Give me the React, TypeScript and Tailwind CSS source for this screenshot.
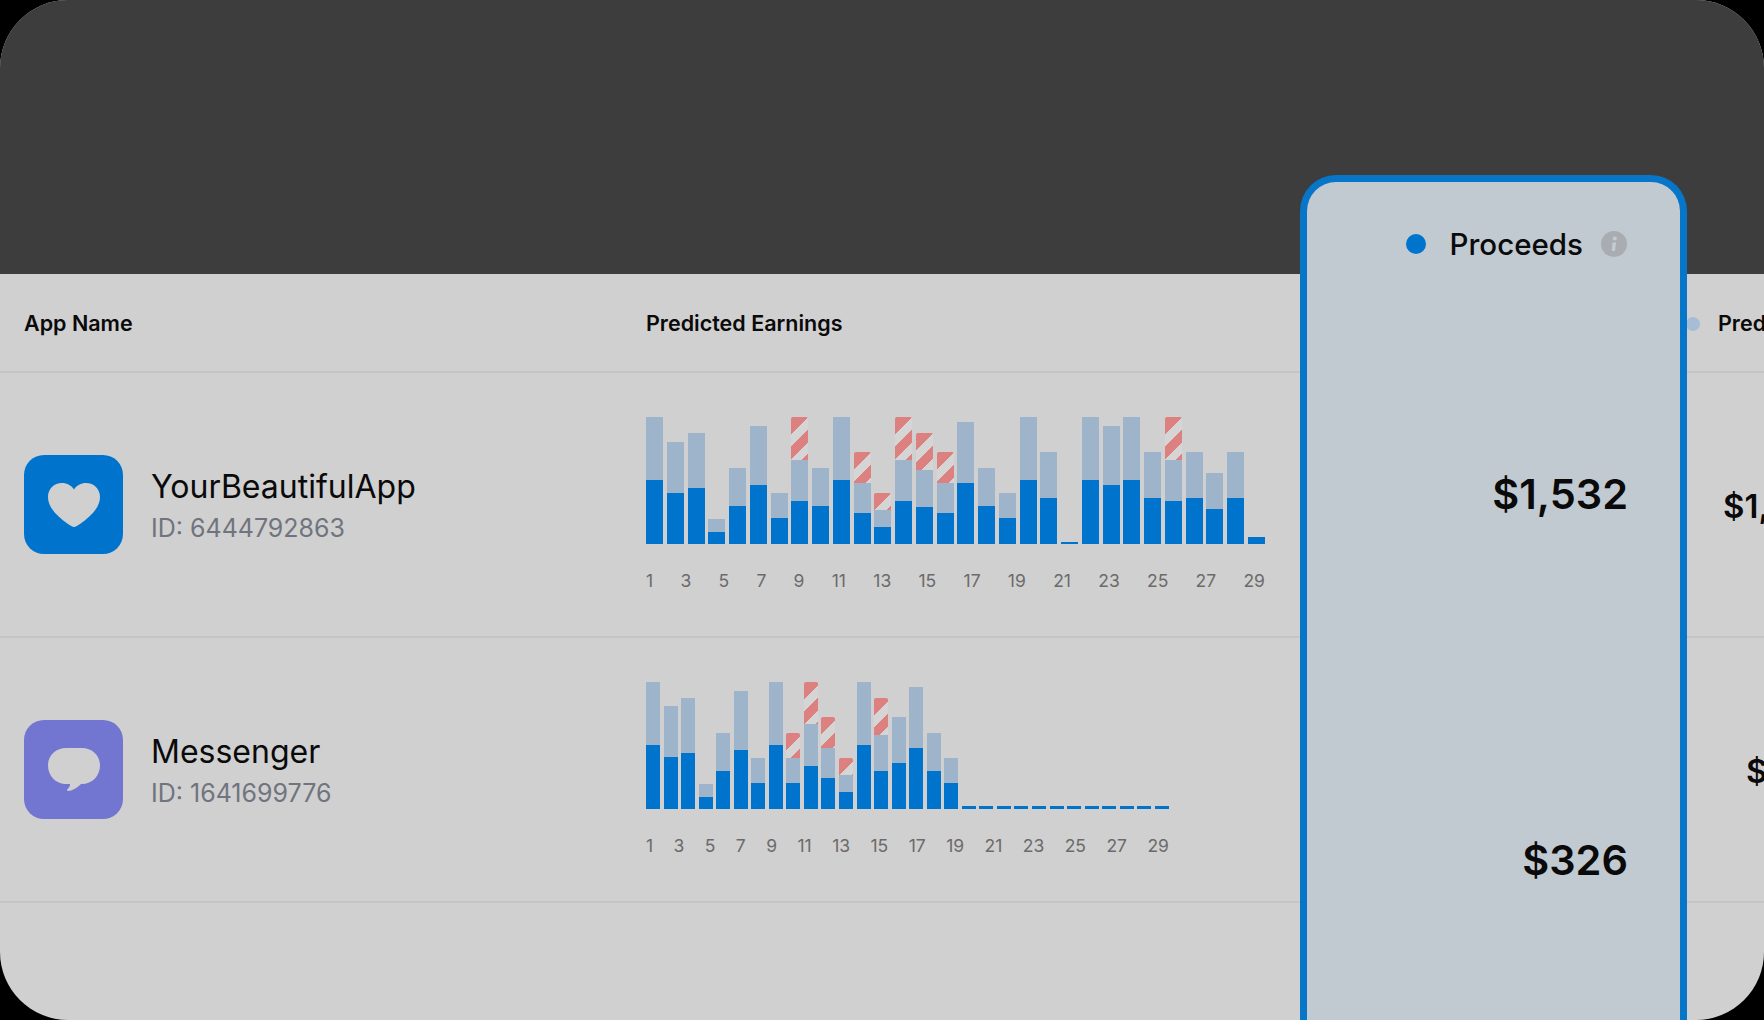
const EARNINGS_A: number[][] = [
  [64, 127], [51, 102], [56, 111], [12, 25], [38, 76], [59, 118], [26, 51], [43, 84, 127], [38, 76], [64, 127],
  [31, 61, 92], [17, 34, 51], [43, 84, 127], [37, 74, 111], [31, 61, 92], [61, 122], [38, 76], [26, 51], [64, 127], [46, 92],
  [2, 2], [64, 127], [59, 118], [64, 127], [46, 92], [43, 84, 127], [46, 92], [35, 71], [46, 92], [7, 7],
];

const EARNINGS_B: number[][] = [
  [64, 127], [52, 103], [56, 111], [12, 25], [38, 76], [59, 118], [26, 51], [64, 127], [26, 51, 76], [43, 85, 127],
  [31, 61, 92], [17, 34, 51], [64, 127], [38, 74, 111], [46, 92], [61, 122], [38, 76], [26, 51],
  [3, 3], [3, 3], [3, 3], [3, 3], [3, 3], [3, 3], [3, 3], [3, 3], [3, 3], [3, 3], [3, 3], [3, 3],
];

const DAYS = [1, 3, 5, 7, 9, 11, 13, 15, 17, 19, 21, 23, 25, 27, 29];

function Chart({ data, className }: { data: number[][]; className: string }) {
  return (
    <div className={className}>
      <div className="flex h-[127px] items-end justify-between">
        {data.map(([blue, light, red], i) => (
          <div key={i} className="flex w-[var(--bar)] flex-col">
            {red ? (
              <div
                className="rounded-t-[2px] bg-[linear-gradient(135deg,#dc8080_0_12.3px,#d5d5d5_12.3px_21.2px,#dc8080_21.2px_29.7px,#d5d5d5_29.7px_37.7px,#dc8080_37.7px_46px,#d5d5d5_46px)]"
                style={{ height: red - light }}
              />
            ) : null}
            <div className="bg-[#9eb4cb]" style={{ height: light - blue }} />
            <div className="bg-[#0074cc]" style={{ height: blue }} />
          </div>
        ))}
      </div>
      <div className="mt-[27px] flex justify-between pb-[1px] text-[17.5px] leading-[20px] text-[#6b6b6b]">
        {DAYS.map((d) => (
          <span key={d}>{d}</span>
        ))}
      </div>
    </div>
  );
}

function AppRow({ name, id, icon, iconBg, children }: { name: string; id: string; icon: React.ReactNode; iconBg: string; children: React.ReactNode }) {
  return (
    <div className="flex h-[265px] items-center border-b-2 border-[#c5c5c5] pl-6">
      <div className="flex w-[622px] items-center gap-[28px]">
        <div className={`flex size-[99px] items-center justify-center rounded-[20px] ${iconBg}`}>{icon}</div>
        <div className="pt-[2px]">
          <div className="text-[32px] leading-[40px] text-[#0a0a0a]">{name}</div>
          <div className="mt-1 text-[25px] leading-[34px] text-[#70747e]">{id}</div>
        </div>
      </div>
      {children}
    </div>
  );
}

export default function App() {
  return (
    <div className="h-[1020px] w-[1764px] overflow-hidden bg-black font-['Inter',sans-serif]">
      <div className="flex h-full flex-col overflow-hidden rounded-[68px] bg-[#d0d0d0]">
        <div className="h-[274px] shrink-0 bg-[#3d3d3d]" />

        <div className="flex flex-1">
          {/* table */}
          <div className="w-[1300px] shrink-0">
            <div className="flex h-[99px] items-center border-b-2 border-[#c5c5c5] pt-[2px] pl-6 text-[21.5px] font-semibold text-[#0a0a0a]">
              <div className="w-[622px]">App Name</div>
              <div>Predicted Earnings</div>
            </div>
            <AppRow
              name="YourBeautifulApp"
              id="ID: 6444792863"
              iconBg="bg-[#0074cc]"
              icon={
                <svg width="52" height="44" viewBox="0 0 52 44">
                  <path
                    d="M26 44C24.5 44 23 43 20 41C10 34 0 25 0 14C0 6 6 0 14 0C19 0 23.500 2.500 26 6.500C28.500 2.500 33 0 38 0C46 0 52 6 52 14C52 25 42 34 32 41C29 43 27.500 44 26 44Z"
                    fill="#d0d0d0"
                  />
                </svg>
              }
            >
              <Chart data={EARNINGS_A} className="w-[619px] [--bar:17px]" />
            </AppRow>
            <AppRow
              name="Messenger"
              id="ID: 1641699776"
              iconBg="bg-[#7276d0]"
              icon={
                <svg width="52" height="43" viewBox="0 0 52 43">
                  <path
                    d="M18 0H34C44 0 52 7 52 17.500C52 28 44 36 34 36H33C29 40 24 43 20 43C18.500 43 19 41.500 20.500 40C21.500 39 22 37.500 22 36H18C8 36 0 28 0 17.500C0 7 8 0 18 0Z"
                    fill="#d0d0d0"
                  />
                </svg>
              }
            >
              <Chart data={EARNINGS_B} className="w-[523px] [--bar:14px]" />
            </AppRow>
          </div>

          {/* highlighted column */}
          <div className="relative z-10 -mt-[99px] w-[387px] shrink-0 rounded-t-[36px] border-[7px] border-b-0 border-[#0775c8] bg-[#c1c9d1] pr-[53px] text-[#0a0a0a]">
            <div className="mt-[44px] flex h-[36px] items-center justify-end">
              <span className="size-[20px] rounded-full bg-[#0074cc]" />
              <span className="ml-[24px] text-[29.500px] font-medium">Proceeds</span>
              <svg className="ml-[18px]" width="26" height="26" viewBox="0 0 26 26">
                <circle cx="13" cy="13" r="13" fill="#a9adb1" />
                <circle cx="13.800" cy="7.500" r="2" fill="#c4ccd3" />
                <path d="M11.500 11.500H15L14 20H10.800Z" fill="#c4ccd3" />
              </svg>
            </div>
            <div className="mt-[207px] -mr-px text-right text-[41.500px] leading-[50px] font-semibold">$1,532</div>
            <div className="mt-[316px] -mr-px text-right text-[41.500px] leading-[50px] font-semibold">$326</div>
          </div>

          {/* next column, cut off by the window */}
          <div className="min-w-0 flex-1 overflow-hidden whitespace-nowrap text-[#0a0a0a]">
            <div className="flex h-[99px] items-center border-b-2 border-[#c5c5c5] pt-[2px] text-[21.5px] font-semibold">
              <span className="-ml-px size-[14px] shrink-0 rounded-full bg-[#a6bdd6]" />
              <span className="ml-[18px]">Pred</span>
            </div>
            <div className="flex h-[265px] items-center border-b-2 border-[#c5c5c5] pt-[4px] pl-[36px] text-[33px] font-semibold">$1,</div>
            <div className="flex h-[265px] items-center border-b-2 border-[#c5c5c5] pt-[4px] pl-[59px] text-[33px] font-semibold">$</div>
          </div>
        </div>
      </div>
    </div>
  );
}
